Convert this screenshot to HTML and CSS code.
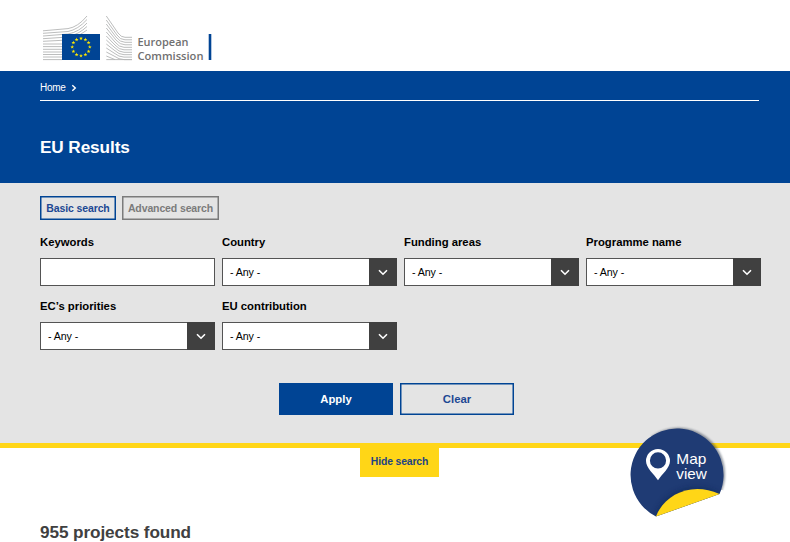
FILE: index.html
```
<!DOCTYPE html>
<html lang="en">
<head>
<meta charset="utf-8">
<title>EU Results</title>
<link rel="stylesheet" href="styles.css">
</head>
<body>
<header class="site-header">
  <svg class="logo" width="180" height="71" viewBox="0 0 180 71" role="img">
    <g class="logo-lines">
      <path d="M3 30.8L28 28.6Q38 27 47 16M3 33.3L28 31.5Q38 29.5 47 19.5M3 36L28 34Q39 32 47 23M3 38.7L28 37Q39 34 47 26.5M3 41.3L28 40Q40 36 47 30M3 44H22M3 46.6H22M3 49.3H22M3 52H22M3 54.5H22M3 57H22M3 59.6H22"/>
      <path d="M66.3 16L78 33Q81 37.3 85 37.3H92M66.3 20L77 35Q80 39.8 85 39.8H92M66.3 24L76 37Q80 42.3 85 42.3H92M66.3 28L76 40Q80 44.8 85 44.8H92M66.3 32L75 42Q79 47.3 84 47.3H92M66.3 36L75 45Q79 49.8 84 49.8H92M66.3 40L74 47Q79 52.3 84 52.3H92M66.3 44L74 50Q79 54.7 84 54.7H92M66.3 48L74 53Q79 57.1 84 57.1H92M66.3 52L74 56Q79 59.6 84 59.6H92M66.3 56L75 59.6M66.3 59.6H92"/>
    </g>
    <rect x="22" y="34" width="38" height="26" fill="#004494"/>
    <defs><path id="star" d="M0-2L.5-.6 1.9-.6.8.3 1.2 1.6 0 .8-1.2 1.6-.8.3-1.9-.6-.5-.6Z" fill="#ffe900"/></defs>
    <use href="#star" x="41" y="38.4"/><use href="#star" x="45.4" y="39.6"/><use href="#star" x="48.6" y="42.7"/><use href="#star" x="49.8" y="47"/><use href="#star" x="48.6" y="51.4"/><use href="#star" x="45.4" y="54.6"/><use href="#star" x="41" y="55.8"/><use href="#star" x="36.6" y="54.6"/><use href="#star" x="33.4" y="51.4"/><use href="#star" x="32.2" y="47"/><use href="#star" x="33.4" y="42.7"/><use href="#star" x="36.6" y="39.6"/>
    <text class="logo-text" x="97.5" textLength="51" y="46.3" lengthAdjust="spacingAndGlyphs">European</text>
    <text class="logo-text" x="97.5" textLength="66" y="59.6" lengthAdjust="spacingAndGlyphs">Commission</text>
    <rect x="168.7" y="34" width="2.6" height="26" fill="#004494"/>
  </svg>
</header>
<section class="banner">
  <nav class="crumbs"><span>Home</span><svg width="6" height="8" viewBox="0 0 6 8"><path d="M1.3 1.2L4.3 4 1.3 6.8"/></svg></nav>
  <h1>EU Results</h1>
</section>
<main>
<form class="search">
  <div class="tabs">
    <button type="button" class="tab active">Basic search</button>
    <button type="button" class="tab">Advanced search</button>
  </div>
  <div class="fields">
    <div class="field"><span class="label">Keywords</span><div class="control"></div></div>
    <div class="field"><span class="label">Country</span><div class="control"><span class="value">- Any -</span><span class="arrow"><svg width="10" height="7" viewBox="0 0 10 7"><path d="M1 1.2L5 5.2 9 1.2"/></svg></span></div></div>
    <div class="field"><span class="label">Funding areas</span><div class="control"><span class="value">- Any -</span><span class="arrow"><svg width="10" height="7" viewBox="0 0 10 7"><path d="M1 1.2L5 5.2 9 1.2"/></svg></span></div></div>
    <div class="field"><span class="label">Programme name</span><div class="control"><span class="value">- Any -</span><span class="arrow"><svg width="10" height="7" viewBox="0 0 10 7"><path d="M1 1.2L5 5.2 9 1.2"/></svg></span></div></div>
    <div class="field"><span class="label">EC’s priorities</span><div class="control"><span class="value">- Any -</span><span class="arrow"><svg width="10" height="7" viewBox="0 0 10 7"><path d="M1 1.2L5 5.2 9 1.2"/></svg></span></div></div>
    <div class="field"><span class="label">EU contribution</span><div class="control"><span class="value">- Any -</span><span class="arrow"><svg width="10" height="7" viewBox="0 0 10 7"><path d="M1 1.2L5 5.2 9 1.2"/></svg></span></div></div>
  </div>
  <div class="actions">
    <button type="button" class="action apply">Apply</button>
    <button type="button" class="action">Clear</button>
  </div>
</form>
<button type="button" class="toggle">Hide search</button>
<h2>955 projects found</h2>
</main>
<svg class="map-badge" width="110" height="105" viewBox="0 0 110 105" role="img">
  <defs>
    <filter id="soft" x="-20%" y="-20%" width="140%" height="140%"><feGaussianBlur stdDeviation="1.3"/></filter>
    <filter id="fold" x="-20%" y="-40%" width="140%" height="180%"><feGaussianBlur stdDeviation="3"/></filter>
    <clipPath id="disc"><path d="M36 96.5A46.5 46.5 0 1 1 99.5 74Z"/></clipPath>
    <clipPath id="shade"><path d="M20 0H110V72L60 60Z"/></clipPath>
  </defs>
  <circle cx="58.7" cy="54" r="46.3" fill="#354052" opacity=".55" filter="url(#soft)" clip-path="url(#shade)"/>
  <path d="M36 96.5A46.5 46.5 0 1 1 99.5 74Z" fill="#1f3b74"/>
  <g clip-path="url(#disc)"><path d="M36 96.5C45 72 72 61 99.5 74Z" fill="#10244c" opacity=".6" filter="url(#fold)"/></g>
  <path d="M36 96.5C44 75 71 61 99.5 74Z" fill="#ffd617"/>
  <path d="M38 60.3C34 54 26 48 26 41A12 12 0 0 1 50 41C50 48 42 54 38 60.3ZM38 32.3A8.1 8.1 0 1 0 38 48.5A8.1 8.1 0 0 0 38 32.3Z" fill="#fff" fill-rule="evenodd"/>
  <text class="map-text" x="56.3" y="43.5" textLength="30" lengthAdjust="spacingAndGlyphs">Map</text>
  <text class="map-text" x="56.3" y="58.8" textLength="30.5" lengthAdjust="spacingAndGlyphs">view</text>
</svg>
</body>
</html>
```
FILE: styles.css
```
* { box-sizing: border-box; }
body {
  margin: 0;
  height: 542px;
  overflow: hidden;
  position: relative;
  background: #fff;
  color: #000;
  font-family: "Liberation Sans", Arial, sans-serif;
}
button { font-family: inherit; margin: 0; padding: 0; }
.site-header { height: 71px; padding-left: 40px; }
.logo { display: block; }
.logo-lines { fill: none; stroke: #b4b6b6; stroke-width: 0.9; }
.logo-text { font: 600 11px "Open Sans", sans-serif; fill: #707070; }
.banner { height: 112px; padding: 0 31px 0 40px; background: #004494; color: #fff; }
.crumbs {
  height: 30px;
  display: flex;
  align-items: center;
  gap: 6px;
  padding-top: 4px;
  border-bottom: 1px solid #fff;
  font-size: 10px;
  letter-spacing: -0.3px;
}
.crumbs svg { fill: none; stroke: #fff; stroke-width: 1.4; }
h1 { margin: 35px 0 0; font-size: 17.2px; line-height: 22px; letter-spacing: -0.1px; }
.search { height: 265px; padding: 13px 0 0 40px; background: #e4e4e4; border-bottom: 5px solid #ffd617; }
.tabs { display: flex; gap: 6px; }
.tab {
  width: 97px;
  height: 24px;
  border: 1px solid #7b7b7b;
  box-shadow: inset 0 0 0 0.5px #7b7b7b;
  background: none;
  color: #7b7b7b;
  font-size: 10.5px;
  font-weight: bold;
  letter-spacing: -0.12px;
}
.tab.active { width: 76px; border-color: #004494; box-shadow: inset 0 0 0 0.5px #004494; color: #1d4893; }
.fields { display: grid; grid-template-columns: repeat(4, 175px); gap: 12px 7px; margin-top: 14px; }
.field { height: 52px; }
.label { display: block; height: 24px; font-size: 11.3px; font-weight: bold; line-height: 17px; }
.control { height: 28px; display: flex; border: 1px solid #545454; background: #fff; }
.value { flex: 1; padding-left: 7px; font-size: 10.7px; line-height: 26px; letter-spacing: -0.1px; }
.arrow { width: 28px; height: 28px; margin: -1px; display: flex; align-items: center; justify-content: center; background: #404040; }
.arrow svg { fill: none; stroke: #fff; stroke-width: 1.6; }
.actions { display: flex; gap: 7px; margin: 33px 0 0 239px; }
.action { width: 114px; height: 32px; padding-bottom: 1px; border: 1px solid #004494; box-shadow: inset 0 0 0 0.5px #004494; background: none; color: #1d4893; font-size: 11.3px; font-weight: bold; }
.apply { background: #004494; color: #fff; }
.toggle { display: block; width: 79px; height: 29px; margin-left: 360px; padding-bottom: 2px; border: 0; background: #ffd617; color: #1d4484; font-size: 10.4px; font-weight: bold; letter-spacing: -0.15px; }
h2 { margin: 44px 0 0 40px; color: #404040; font-size: 17.2px; line-height: 22px; letter-spacing: -0.1px; }
.map-badge { position: absolute; left: 620px; top: 420px; }
.map-text { fill: #fff; font: 15px "Liberation Sans", sans-serif; }
```
